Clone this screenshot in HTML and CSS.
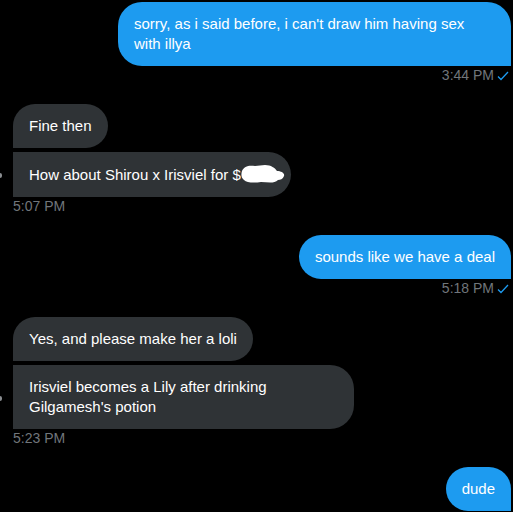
FILE: index.html
```html
<!DOCTYPE html>
<html>
<head>
<meta charset="utf-8">
<link rel="stylesheet" href="styles.css">
</head>
<body>
<div class="chat">
  <div class="group sent">
    <div class="bubble blue wide">sorry, as i said before, i can't draw him having sex<br>with illya</div>
    <div class="meta">3:44 PM <svg class="check" width="12" height="10" viewBox="0 0 12 10"><path d="M1 5.5 L4 8.5 L11 1" fill="none" stroke="#1d9bf0" stroke-width="1.3"/></svg></div>
  </div>

  <div class="group recv">
    <div class="row">
      <span class="stub"></span>
      <div class="bubble gray first">Fine then</div>
    </div>
    <div class="row">
      <span class="stub dot"></span>
      <div class="bubble gray last">How about Shirou x Irisviel for $<svg class="blot" width="44" height="20" viewBox="0 0 44 20"><path d="M1 7 C3 2 8 1 14 2 L24 1 C30 1 34 4 36 7 C40 7 44 9 43 12 C42 15 39 16 37 16 C33 20 26 18 20 18 C13 19 6 19 3 16 C0 14 0 10 1 7 Z" fill="#fff"/></svg></div>
    </div>
    <div class="meta left">5:07 PM</div>
  </div>

  <div class="group sent">
    <div class="bubble blue">sounds like we have a deal</div>
    <div class="meta">5:18 PM <svg class="check" width="12" height="10" viewBox="0 0 12 10"><path d="M1 5.5 L4 8.5 L11 1" fill="none" stroke="#1d9bf0" stroke-width="1.3"/></svg></div>
  </div>

  <div class="group recv">
    <div class="row">
      <span class="stub"></span>
      <div class="bubble gray first">Yes, and please make her a loli</div>
    </div>
    <div class="row">
      <span class="stub dot"></span>
      <div class="bubble gray last wide-recv">Irisviel becomes a Lily after drinking<br>Gilgamesh's potion</div>
    </div>
    <div class="meta left">5:23 PM</div>
  </div>

  <div class="group sent">
    <div class="bubble blue">dude</div>
  </div>
</div>
</body>
</html>
```
FILE: styles.css
```css
html, body {
  margin: 0;
  background: #000;
}
body {
  font-family: "Liberation Sans", Arial, sans-serif;
  overflow: hidden;
}
.chat {
  display: flex;
  flex-direction: column;
  gap: 21px;
  padding: 2px 2px 0 0;
}
.group {
  display: flex;
  flex-direction: column;
}
.sent {
  align-items: flex-end;
}
.recv {
  align-items: flex-start;
  gap: 4px;
}
.row {
  display: flex;
  align-items: center;
}
.stub {
  width: 2px;
  height: 5px;
  margin-right: 11px;
}
.stub.dot {
  background: #8a8d91;
  border-radius: 0 2px 2px 0;
  margin-top: 2px;
}
.bubble {
  font-size: 15px;
  line-height: 20px;
  padding: 12px 16px;
  color: #fff;
  box-sizing: border-box;
}
.blue {
  background: #1d9bf0;
  border-radius: 24px 24px 0 24px;
}
.wide {
  width: 393px;
}
.wide-recv {
  width: 341px;
}
.gray {
  background: #2f3336;
}
.gray.first {
  border-radius: 24px 24px 24px 0;
}
.gray.last {
  border-radius: 0 24px 24px 0;
}
.blot {
  vertical-align: -4px;
  margin-left: 0;
  margin-right: -10px;
}
.meta {
  margin-top: 1px;
  height: 16px;
  font-size: 14px;
  line-height: 16px;
  color: #71767b;
  display: flex;
  align-items: center;
  gap: 3px;
}
.recv .meta {
  margin-top: -3px;
  margin-left: 13px;
}
.check {
  display: block;
  margin-top: 2px;
  margin-right: 2px;
}
```
